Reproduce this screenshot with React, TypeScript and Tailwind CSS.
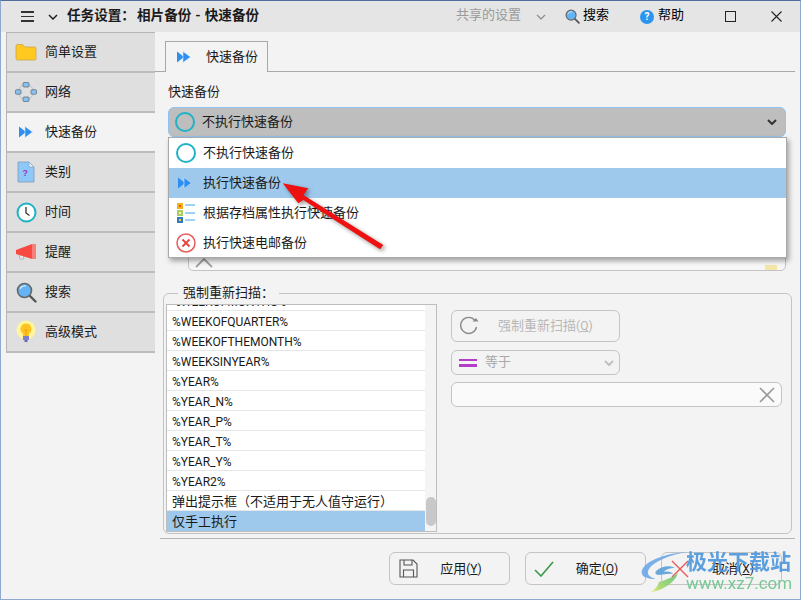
import React from "react";

function ForwardIcon({ className = "" }: { className?: string }) {
  return (
    <svg width="14" height="12" viewBox="0 0 14 12" className={className}>
      <path d="M0 .5l7 5.500-7 5.500z" fill="#2e8ff0" />
      <path d="M6 .5l7.500 5.500-7.500 5.500z" fill="#2e8ff0" stroke="#cfe6fb" strokeWidth="0.6" />
    </svg>
  );
}

function RingIcon() {
  return <div className="w-[20px] h-[20px] rounded-full border-[2px] border-[#1fb2c4]" />;
}

function FolderIcon() {
  return (
    <svg width="22" height="18" viewBox="0 0 22 18">
      <path d="M1 3a1.5 1.5 0 0 1 1.5-1.5h5L10 4h9.5A1.5 1.5 0 0 1 21 5.500v10a1.500 1.500 0 0 1-1.500 1.500h-17A1.500 1.500 0 0 1 1 15.500z" fill="#ffc91f" stroke="#c9a64a" strokeWidth="0.8" />
    </svg>
  );
}

function NetworkIcon() {
  return (
    <svg width="22" height="22" viewBox="0 0 22 22">
      <circle cx="11" cy="11" r="7.500" fill="none" stroke="#c4cad2" strokeWidth="1.200" />
      <rect x="8" y="1.500" width="6" height="4.500" rx="1" fill="#8cc0ea" stroke="#567" strokeWidth="0.7" />
      <rect x="8" y="16" width="6" height="4.500" rx="1" fill="#8cc0ea" stroke="#567" strokeWidth="0.7" />
      <rect x="0.500" y="8.700" width="5.500" height="4.500" rx="1" fill="#8cc0ea" stroke="#567" strokeWidth="0.7" />
      <rect x="16" y="8.700" width="5.500" height="4.500" rx="1" fill="#8cc0ea" stroke="#567" strokeWidth="0.7" />
    </svg>
  );
}

function FileIcon() {
  return (
    <svg width="18" height="22" viewBox="0 0 18 22">
      <path d="M1 1h11l5 5v15H1z" fill="#8ec8f8" stroke="#7b9ab5" strokeWidth="0.8" />
      <path d="M12 1v5h5z" fill="#e6f2fc" stroke="#7b9ab5" strokeWidth="0.6" />
      <text x="5.500" y="15" fontSize="9" fontWeight="700" fill="#9c35c0" fontFamily="Liberation Sans">?</text>
    </svg>
  );
}

function ClockIcon() {
  return (
    <svg width="21" height="21" viewBox="0 0 21 21">
      <circle cx="10.500" cy="10.500" r="9" fill="#fff" stroke="#1fb2c4" strokeWidth="2" />
      <path d="M10 5v6l3.500 2.500" fill="none" stroke="#333" strokeWidth="1.300" />
    </svg>
  );
}

function HornIcon() {
  return (
    <svg width="22" height="18" viewBox="0 0 22 18">
      <path d="M4 11l1 5h4l-1-4" fill="#e8e8e8" stroke="#aaa" strokeWidth="0.8" />
      <path d="M1 7l16-6v15L1 11z" fill="#f84a40" />
      <rect x="17" y="1" width="4" height="15" fill="#f7817a" />
    </svg>
  );
}

function SearchIcon({ size = 21 }: { size?: number }) {
  return (
    <svg width={size} height={size} viewBox="0 0 21 21">
      <path d="M13.500 13.500l6 6" stroke="#555" strokeWidth="2.400" strokeLinecap="round" />
      <circle cx="8.500" cy="8.500" r="7" fill="#64b3f4" stroke="#666" strokeWidth="1.600" />
      <path d="M4 7a5 5 0 0 1 6-3" fill="none" stroke="#cfe8fb" strokeWidth="1.300" />
    </svg>
  );
}

function BulbIcon() {
  return (
    <svg width="20" height="24" viewBox="0 0 20 24">
      <circle cx="10" cy="10" r="9.500" fill="#fff59a" />
      <path d="M10 3.500a5.500 5.500 0 0 0-3 10.100V16h6v-2.400A5.500 5.500 0 0 0 10 3.500z" fill="#ffc422" />
      <path d="M8.500 9l1.500 2 1.500-2M10 11v5" fill="none" stroke="#e59a10" strokeWidth="0.800" />
      <rect x="7" y="16" width="6" height="4" fill="#7d7fc8" />
      <rect x="8.500" y="20" width="3" height="2" fill="#6668b0" />
    </svg>
  );
}

function ListIcon() {
  return (
    <svg width="20" height="20" viewBox="0 0 20 20">
      <rect x="0" y="0" width="6" height="6" fill="#f5b21c" />
      <rect x="2" y="2" width="2" height="2" fill="#e8541c" />
      <rect x="0" y="7" width="6" height="6" fill="#a6cf5f" />
      <rect x="2" y="9" width="2" height="2" fill="#f2f2d0" />
      <rect x="0" y="14" width="6" height="6" fill="#2f7dbd" />
      <rect x="2" y="16" width="2" height="2" fill="#f5c83c" />
      <rect x="8" y="1" width="10" height="2" fill="#9fd0f5" />
      <rect x="8" y="9" width="10" height="2" fill="#9fd0f5" />
      <rect x="8" y="16" width="10" height="2" fill="#9fd0f5" />
    </svg>
  );
}

function RedCross() {
  return (
    <svg width="20" height="20" viewBox="0 0 20 20">
      <circle cx="10" cy="10" r="9" fill="#fff" stroke="#ec5a5a" strokeWidth="1.500" />
      <path d="M6.500 6.500l7 7M13.500 6.500l-7 7" stroke="#e8413f" strokeWidth="1.800" />
    </svg>
  );
}

function Chevron({ color = "#333", w = 1.500 }: { color?: string; w?: number }) {
  return (
    <svg width="10" height="6" viewBox="0 0 10 6">
      <path d="M1 1l4 4 4-4" fill="none" stroke={color} strokeWidth={w} />
    </svg>
  );
}

function SaveIcon() {
  return (
    <svg width="19" height="19" viewBox="0 0 19 19" fill="none" stroke="#555" strokeWidth="1.100">
      <path d="M1 1h13l4 4v13H1z" />
      <path d="M5 1v5h8V1M4.500 18v-7h10v7" />
    </svg>
  );
}

const navItems = [
  { label: "简单设置", icon: <FolderIcon /> },
  { label: "网络", icon: <NetworkIcon /> },
  { label: "快速备份", icon: <ForwardIcon />, active: true },
  { label: "类别", icon: <FileIcon /> },
  { label: "时间", icon: <ClockIcon /> },
  { label: "提醒", icon: <HornIcon /> },
  { label: "搜索", icon: <SearchIcon /> },
  { label: "高级模式", icon: <BulbIcon /> },
];

const listRows = [
  "%WEEKOFMONTHS%",
  "%WEEKOFQUARTER%",
  "%WEEKOFTHEMONTH%",
  "%WEEKSINYEAR%",
  "%YEAR%",
  "%YEAR_N%",
  "%YEAR_P%",
  "%YEAR_T%",
  "%YEAR_Y%",
  "%YEAR2%",
];

function FooterButton({ icon, label, hot }: { icon: React.ReactNode; label: string; hot: string }) {
  return (
    <div className="w-[121px] h-[33px] flex items-center rounded-[6px] border border-[#c4c4c4] pl-[7px]">
      <div className="w-[22px] flex justify-center">{icon}</div>
      <div className="flex-1 text-center pr-[6px]">
        {label}
        <span className="text-[12px]">
          (<span className="underline">{hot}</span>)
        </span>
      </div>
    </div>
  );
}

export default function App() {
  return (
    <div className="w-[801px] h-[600px] relative overflow-hidden flex flex-col bg-[#f3f3f3] border-t border-t-[#4f6f9f] border-x border-x-[#8fa8d0] border-b border-b-[#8fa8d0] text-[13px] leading-[18px] text-[#1a1a1a] font-['Roboto','Noto_Sans_CJK_SC',sans-serif]">
      {/* title bar */}
      <div className="h-[31px] flex items-center bg-[#e5e5e5] shrink-0">
        <div className="ml-[20px] w-[13px] flex flex-col gap-[3px]">
          <div className="h-[1.5px] bg-[#333]" />
          <div className="h-[1.5px] bg-[#333]" />
          <div className="h-[1.5px] bg-[#333]" />
        </div>
        <div className="ml-[14px] flex">
          <Chevron color="#222" />
        </div>
        <div className="ml-[9px] pb-[3px] text-[13.6px] font-bold whitespace-nowrap">
          任务设置：<span className="ml-[2px]">相片备份</span>
          <span className="mx-[4px]">-</span>快速备份
        </div>
        <div className="ml-auto pb-[3px] text-[#9a9a9a]">共享的设置</div>
        <div className="ml-[15px] flex">
          <Chevron color="#888" w={1.2} />
        </div>
        <div className="ml-[19px] flex">
          <SearchIcon size={15} />
        </div>
        <div className="ml-[3px] pb-[3px] text-black">搜索</div>
        <div className="ml-[31px] w-[14px] h-[14px] rounded-full bg-[#2b95ee] text-white text-[10px] leading-[14px] font-bold text-center">?</div>
        <div className="ml-[4px] pb-[3px] text-black">帮助</div>
        <div className="ml-[41px] w-[11px] h-[11px] border-[1.5px] border-[#222]" />
        <svg width="11" height="11" viewBox="0 0 11 11" className="ml-[35px] mr-[18px]">
          <path d="M.5.500l10 10M10.500.500l-10 10" stroke="#222" strokeWidth="1.100" />
        </svg>
      </div>

      <div className="flex flex-1 min-h-0">
        {/* sidebar */}
        <div className="w-[154px] pl-[5px] shrink-0">
          <div className="border-l border-[#b5b5b5] border-t">
            {navItems.map((item) => (
              <div
                key={item.label}
                className={`h-[40px] flex items-center border-b-2 border-[#bcbcbc] ${item.active ? "bg-[#f3f3f3]" : "bg-[#dfdfdf]"}`}
              >
                <div className="w-[38px] flex justify-center">{item.icon}</div>
                <span>{item.label}</span>
              </div>
            ))}
          </div>
        </div>

        {/* main panel */}
        <div className="flex-1 relative pt-[10px] pr-[5px]">
          <div className="flex items-end h-[30px] border-b border-[#a8a8a8] pl-[10px]">
            <div className="h-[31px] w-[103px] -mb-px flex items-center bg-[#f3f3f3] border border-b-0 border-[#a8a8a8] pl-[11px]">
              <ForwardIcon />
              <span className="ml-[15px]">快速备份</span>
            </div>
          </div>

          <div className="pl-[13px] pr-[9px]">
            <div className="mt-[11px] h-[18px]">快速备份</div>
            <div className="mt-[6px] h-[30px] flex items-center rounded-[6px] border border-[#90c4ee] bg-[#bebebe] pl-[6px] pr-[8px]">
              <RingIcon />
              <span className="ml-[7px]">不执行快速备份</span>
              <div className="ml-auto flex">
                <Chevron w={2} />
              </div>
            </div>
            {/* field behind the open list */}
            <div className="ml-[20px] mt-[108px] h-[26px] rounded-[5px] border border-[#c4c4c4] bg-[#f7f7f7] overflow-hidden flex items-end justify-between pl-[6px] pr-[8px]">
              <svg width="18" height="10" viewBox="0 0 18 10" className="mb-[2px]">
                <path d="M1 9l8-8 8 8" fill="none" stroke="#a0a0a0" strokeWidth="1.800" />
              </svg>
              <div className="w-[12px] h-[5px] bg-[#f5e6a8]" />
            </div>
          </div>

          {/* rescan group */}
          <div className="relative ml-[8px] mt-[22px] h-[241px] w-[629px] rounded-[6px] border border-[#c4c4c4] flex pt-[10px] pl-[2px]">
            <span className="absolute left-[14px] -top-[10px] bg-[#f3f3f3] px-[5px]">强制重新扫描：</span>
            <div className="w-[271px] h-[228px] border border-[#bdbdbd] bg-white flex overflow-hidden shrink-0">
              <div className="w-[258px] flex flex-col justify-end">
                {listRows.map((row) => (
                  <div key={row} className="h-[20px] shrink-0 flex items-center pl-[5px] pt-[2px] border-b border-[#e6e6e6] whitespace-nowrap text-[12px]">
                    {row}
                  </div>
                ))}
                <div className="h-[20px] shrink-0 flex items-center pl-[5px] pt-[2px] border-b border-[#e6e6e6] whitespace-nowrap">
                  弹出提示框（不适用于无人值守运行）
                </div>
                <div className="h-[20px] shrink-0 flex items-center pl-[5px] pt-[2px] bg-[#9fc9ec]">仅手工执行</div>
              </div>
              <div className="flex-1 bg-[#f4f4f4] flex flex-col justify-end items-center pb-[5px]">
                <div className="w-[10px] h-[29px] rounded-[5px] bg-[#c8c8c8]" />
              </div>
            </div>
            <div className="ml-[14px] pt-[6px] text-[#b8b8b8]">
              <div className="w-[169px] h-[32px] flex items-center rounded-[6px] border border-[#c4c4c4] pl-[6px]">
                <svg width="22" height="20" viewBox="0 0 22 20" fill="none">
                  <path d="M17 4.500A8 8 0 1 0 18.500 11" stroke="#8a8a8a" strokeWidth="1.400" />
                  <path d="M14.500 5.500h6l-2.500-3.500z" fill="#8a8a8a" />
                </svg>
                <span className="ml-[18px]">
                  强制重新扫描<span className="text-[12px]">(<span className="underline">Q</span>)</span>
                </span>
              </div>
              <div className="mt-[8px] w-[169px] h-[25px] flex items-center rounded-[6px] border border-[#c4c4c4] pl-[7px] pr-[5px]">
                <div className="w-[18px] flex flex-col gap-[3px]">
                  <div className="h-[2.500px] bg-[#b23dc8]" />
                  <div className="h-[2.500px] bg-[#b23dc8]" />
                </div>
                <span className="ml-[8px] pb-[1px] text-[#a8a8a8]">等于</span>
                <div className="ml-auto flex">
                  <Chevron color="#c0c0c0" w={2} />
                </div>
              </div>
              <div className="mt-[7px] w-[331px] h-[25px] flex items-center justify-end rounded-[6px] border border-[#c4c4c4] bg-[#fafafa] pr-[6px]">
                <svg width="16" height="16" viewBox="0 0 16 16">
                  <path d="M1 1l14 14M15 1L1 15" stroke="#9a9a9a" strokeWidth="1.600" />
                </svg>
              </div>
            </div>
          </div>

          <div className="ml-[5px] mt-[4px] h-px bg-[#b5b5b5]" />

          {/* footer buttons */}
          <div className="mt-[13px] flex gap-[15px] pl-[234px]">
            <FooterButton icon={<SaveIcon />} label="应用" hot="Y" />
            <FooterButton
              icon={
                <svg width="20" height="16" viewBox="0 0 20 16">
                  <path d="M1 9l6 6L19 1" fill="none" stroke="#3a9a48" strokeWidth="1.600" />
                </svg>
              }
              label="确定"
              hot="O"
            />
            <FooterButton
              icon={
                <svg width="20" height="18" viewBox="0 0 20 18">
                  <path d="M2 1l16 16M18 1L2 17" stroke="#e85a5a" strokeWidth="1.400" />
                </svg>
              }
              label="取消"
              hot="X"
            />
          </div>

          {/* open combo list */}
          <div className="absolute left-[13px] top-[105px] w-[619px] h-[121px] bg-white border border-[#a9a9a9] shadow-[2px_3px_5px_rgba(0,0,0,0.35)]">
            <div className="h-[30px] flex items-center pl-[7px]">
              <RingIcon />
              <span className="ml-[7px]">不执行快速备份</span>
            </div>
            <div className="h-[30px] flex items-center pl-[9px] bg-[#9fc9ec]">
              <ForwardIcon />
              <span className="ml-[11px]">执行快速备份</span>
            </div>
            <div className="h-[30px] flex items-center pl-[8px]">
              <ListIcon />
              <span className="ml-[6px]">根据存档属性执行快速备份</span>
            </div>
            <div className="h-[30px] flex items-center pl-[7px]">
              <RedCross />
              <span className="ml-[7px]">执行快速电邮备份</span>
            </div>
          </div>
        </div>
      </div>

      {/* red arrow drawn on the screenshot */}
      <svg width="110" height="75" viewBox="0 0 110 75" className="absolute left-[277px] top-[178px] drop-shadow-[2px_2px_2px_rgba(0,0,0,0.4)]">
        <path d="M4.700 4.300L30.300 9.300 25.300 16 105.300 66 102 70.300 25.300 21 20.300 24.300z" fill="#ee1111" />
      </svg>

      {/* watermark */}
      <div className="absolute left-[639px] top-[549px] w-[155px] h-[44px] flex opacity-90">
        <svg width="50" height="42" viewBox="0 0 50 42" className="shrink-0">
          <defs>
            <linearGradient id="wm-green" x1="1" y1="0" x2="0" y2="1">
              <stop offset="0" stopColor="#5fc27a" />
              <stop offset="0.700" stopColor="#a4d86a" />
              <stop offset="1" stopColor="#f0e060" />
            </linearGradient>
          </defs>
          <path d="M47 2C28 3 6 10 2 20c-2 6 4 9 14 9-7-2-10-5-7-10C14 11 30 5 47 2z" fill="#6ea8e8" />
          <path d="M16 21c5-5 14-6 19-3-5 0-9 1-11 4 4-1 8 0 9 2-5-1-12 1-15 1-3-1-3-2-2-4z" fill="#5aa0d8" />
          <path d="M11 42c10-1 24-9 27-19-3 3-12 7-19 9-1 4-4 8-8 10z" fill="url(#wm-green)" />
        </svg>
        <div className="ml-[-4px] flex flex-col">
          <span className="text-[21px] leading-[24px] font-bold text-[#4c96dc] whitespace-nowrap">极光下载站</span>
          <span className="text-[17px] leading-[18px] text-[#6cc48c] whitespace-nowrap">www.xz7.com</span>
        </div>
      </div>
    </div>
  );
}
